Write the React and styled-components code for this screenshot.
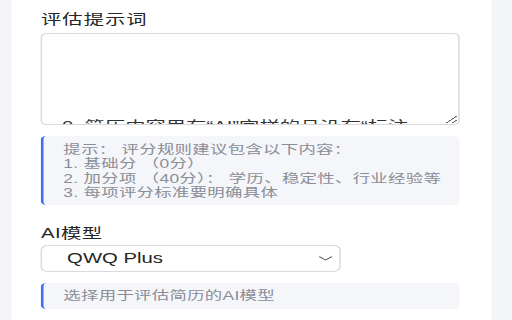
import React from "react";
import styled, { createGlobalStyle } from "styled-components";

const GlobalStyle = createGlobalStyle`
  html, body {
    margin: 0;
    padding: 0;
    overflow: hidden;
    background: #f4f5f9;
    font-family: "Liberation Sans", "Noto Sans CJK SC", sans-serif;
  }
`;

/* the screenshot is stretched sideways, so the page is drawn narrow and widened */
const Page = styled.div`
  width: 353px;
  height: 320px;
  overflow: hidden;
  padding: 0 14.4px 0 7.6px;
  box-sizing: border-box;
  transform: scaleX(1.45);
  transform-origin: 0 0;
`;

const Card = styled.div`
  background: #fff;
  height: 100%;
  padding: 9px 21.3px 0 20.7px;
  box-sizing: border-box;
`;

const Label = styled.div`
  font-size: 14px;
  line-height: 20px;
  color: #262626;
  letter-spacing: ${(p) => p.$spacing || 0}px;
  margin-top: ${(p) => p.$top || 0}px;
  margin-bottom: ${(p) => p.$gap || 0}px;
`;

const PromptArea = styled.textarea`
  display: block;
  width: 100%;
  height: 92px;
  box-sizing: border-box;
  border: 1px solid #d9d9de;
  border-radius: 4px;
  padding: 2px 13.5px;
  font-family: "Liberation Sans", "Noto Sans CJK SC", sans-serif;
  font-size: 14px;
  line-height: 20px;
  color: #333;
  white-space: pre;
  overflow: hidden;
  outline: none;
`;

const Hint = styled.div`
  margin-top: 11px;
  background: #f5f6fa;
  border-left: 2.5px solid #3d6ef5;
  border-radius: 4px;
  padding: ${(p) => p.$pad};
  font-size: 12px;
  line-height: 14.5px;
  letter-spacing: 0.2px;
  color: #8a8d96;
  white-space: pre-line;
`;

const SelectBox = styled.div`
  margin-top: 2.4px;
  width: 207px;
  height: 27px;
  box-sizing: border-box;
  border: 1px solid #d9d9de;
  border-radius: 5px;
  display: flex;
  align-items: center;
  justify-content: space-between;
  padding: 0 5px 0 17px;
  font-size: 14px;
  color: #262626;
`;

const Chevron = () => (
  <svg width="9" height="5" viewBox="0 0 9 5" fill="none">
    <path d="M0.5 0.8 L4.5 4 L8.5 0.8" stroke="#555" strokeWidth="0.9" strokeLinecap="round" />
  </svg>
);

const prompt = "\n\n\n\n0. 简历内容里有“AI”字样的且没有“标注";

const tips =
  "提示： 评分规则建议包含以下内容：\n1. 基础分 （0分）\n2. 加分项 （40分）： 学历、稳定性、行业经验等\n3. 每项评分标准要明确具体";

export default function App() {
  return (
    <Page>
      <GlobalStyle />
      <Card>
        <Label $gap={4} $spacing={0.7}>评估提示词</Label>
        <PromptArea defaultValue={prompt} />
        <Hint $pad="6.5px 8px 4.5px 13.4px">{tips}</Hint>
        <Label $top={17.6} $spacing={0.3}>AI模型</Label>
        <SelectBox>
          <span>QWQ Plus</span>
          <Chevron />
        </SelectBox>
        <Hint $pad="6px 8px 5.5px 13.4px">选择用于评估简历的AI模型</Hint>
      </Card>
    </Page>
  );
}
